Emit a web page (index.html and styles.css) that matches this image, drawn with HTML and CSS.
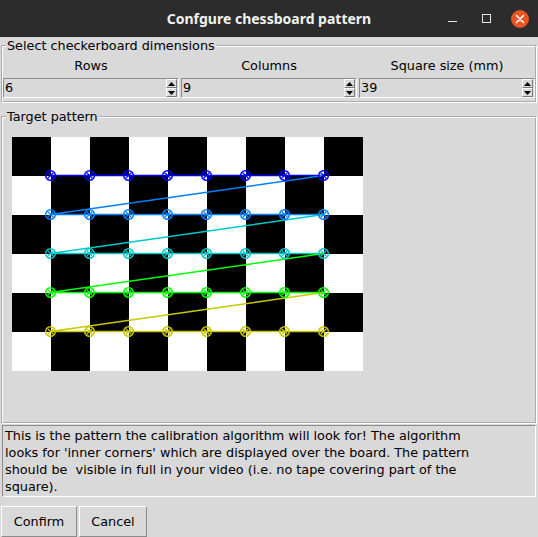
FILE: index.html
```html
<!DOCTYPE html>
<html>
<head>
<meta charset="utf-8">
<link rel="stylesheet" href="styles.css">
</head>
<body>
<div class="titlebar">
  <div></div>
  <div class="title">Confgure chessboard pattern</div>
  <div class="controls">
    <span class="ctl"><span class="min"></span></span>
    <span class="ctl"><span class="max"></span></span>
    <span class="ctl"><span class="close"><svg width="18" height="18" viewBox="0 0 18 18"><path d="M5.5 5.5L12.5 12.5M12.5 5.5L5.5 12.5" stroke="#fff" stroke-width="1.6" stroke-linecap="round"/></svg></span></span>
  </div>
</div>

<fieldset class="group dims">
  <legend>Select checkerboard dimensions</legend>
  <div class="grid">
    <div class="lbl">Rows</div>
    <div class="lbl">Columns</div>
    <div class="lbl">Square size (mm)</div>
    <div class="spin"><span class="val">6</span><span class="arrows"><span class="arr"><svg width="7" height="4"><path d="M3.5 0L7 4H0Z"/></svg></span><span class="arr"><svg width="7" height="4"><path d="M0 0H7L3.5 4Z"/></svg></span></span></div>
    <div class="spin"><span class="val">9</span><span class="arrows"><span class="arr"><svg width="7" height="4"><path d="M3.5 0L7 4H0Z"/></svg></span><span class="arr"><svg width="7" height="4"><path d="M0 0H7L3.5 4Z"/></svg></span></span></div>
    <div class="spin"><span class="val">39</span><span class="arrows"><span class="arr"><svg width="7" height="4"><path d="M3.5 0L7 4H0Z"/></svg></span><span class="arr"><svg width="7" height="4"><path d="M0 0H7L3.5 4Z"/></svg></span></span></div>
  </div>
</fieldset>

<fieldset class="group target">
  <legend>Target pattern</legend>
  <div class="canvas">
    <svg class="board" width="351" height="234" viewBox="0 0 351 234">
      <defs>
        <pattern id="chk" width="78" height="78" patternUnits="userSpaceOnUse">
          <rect x="0" y="0" width="39" height="39" fill="#000"/>
          <rect x="39" y="39" width="39" height="39" fill="#000"/>
        </pattern>
        <g id="mk" fill="none" stroke-width="1.5">
          <circle r="4.8"/>
          <path d="M-3 -3L3 3M-3 3L3 -3" stroke-width="1.2"/>
        </g>
      </defs>
      <rect width="351" height="234" fill="#fff"/>
      <rect width="351" height="234" fill="url(#chk)"/>
      <g fill="none" stroke-width="1.5">
        <path d="M38.5 38.5H311.5" stroke="#0000ff"/>
        <path d="M311.5 38.5L38.5 77.5H311.5" stroke="#0080ff"/>
        <path d="M311.5 77.5L38.5 116.5H311.5" stroke="#00c8c8"/>
        <path d="M311.5 116.5L38.5 155.5H311.5" stroke="#00ff00"/>
        <path d="M311.5 155.5L38.5 194.5H311.5" stroke="#c8c800"/>
      </g>
      <g stroke="#0000ff">
        <use href="#mk" x="38.5" y="38.5"/><use href="#mk" x="77.5" y="38.5"/><use href="#mk" x="116.5" y="38.5"/><use href="#mk" x="155.5" y="38.5"/><use href="#mk" x="194.5" y="38.5"/><use href="#mk" x="233.5" y="38.5"/><use href="#mk" x="272.5" y="38.5"/><use href="#mk" x="311.5" y="38.5"/>
      </g>
      <g stroke="#0080ff">
        <use href="#mk" x="38.5" y="77.5"/><use href="#mk" x="77.5" y="77.5"/><use href="#mk" x="116.5" y="77.5"/><use href="#mk" x="155.5" y="77.5"/><use href="#mk" x="194.5" y="77.5"/><use href="#mk" x="233.5" y="77.5"/><use href="#mk" x="272.5" y="77.5"/><use href="#mk" x="311.5" y="77.5"/>
      </g>
      <g stroke="#00c8c8">
        <use href="#mk" x="38.5" y="116.5"/><use href="#mk" x="77.5" y="116.5"/><use href="#mk" x="116.5" y="116.5"/><use href="#mk" x="155.5" y="116.5"/><use href="#mk" x="194.5" y="116.5"/><use href="#mk" x="233.5" y="116.5"/><use href="#mk" x="272.5" y="116.5"/><use href="#mk" x="311.5" y="116.5"/>
      </g>
      <g stroke="#00ff00">
        <use href="#mk" x="38.5" y="155.5"/><use href="#mk" x="77.5" y="155.5"/><use href="#mk" x="116.5" y="155.5"/><use href="#mk" x="155.5" y="155.5"/><use href="#mk" x="194.5" y="155.5"/><use href="#mk" x="233.5" y="155.5"/><use href="#mk" x="272.5" y="155.5"/><use href="#mk" x="311.5" y="155.5"/>
      </g>
      <g stroke="#c8c800">
        <use href="#mk" x="38.5" y="194.5"/><use href="#mk" x="77.5" y="194.5"/><use href="#mk" x="116.5" y="194.5"/><use href="#mk" x="155.5" y="194.5"/><use href="#mk" x="194.5" y="194.5"/><use href="#mk" x="233.5" y="194.5"/><use href="#mk" x="272.5" y="194.5"/><use href="#mk" x="311.5" y="194.5"/>
      </g>
    </svg>
  </div>
</fieldset>

<div class="info">This is the pattern the calibration algorithm will look for! The algorithm<br>looks for 'inner corners' which are displayed over the board. The pattern<br>should be&nbsp; visible in full in your video (i.e. no tape covering part of the<br>square).</div>

<div class="buttons">
  <button class="btn confirm">Confirm</button>
  <button class="btn cancel">Cancel</button>
</div>
</body>
</html>
```

FILE: styles.css
```css
html, body {
  margin: 0;
  padding: 0;
}
body {
  width: 538px;
  height: 537px;
  overflow: hidden;
  background: #d9d9d9;
  font-family: "DejaVu Sans", sans-serif;
  font-size: 12.8px;
  color: #000;
}

.titlebar {
  height: 37px;
  background: #2c2c2c;
  display: grid;
  grid-template-columns: 1fr auto 1fr;
  align-items: center;
}
.title {
  font-family: "Noto Sans", "DejaVu Sans", sans-serif;
  font-weight: 700;
  font-size: 14px;
  color: #f2f2f2;
  line-height: 37px;
}
.controls {
  justify-self: end;
  display: flex;
  padding-right: 1px;
  height: 37px;
}
.ctl {
  width: 34px;
  height: 37px;
  display: flex;
  align-items: center;
  justify-content: center;
}
.min {
  width: 9px;
  height: 1px;
  background: #e6e6e6;
  margin-top: 5px;
}
.max {
  width: 7px;
  height: 7px;
  border: 1px solid #e6e6e6;
}
.close {
  width: 18px;
  height: 18px;
  border-radius: 50%;
  background: #e95420;
  display: flex;
  margin-top: 1px;
}

.group {
  margin: 0 1px;
  padding: 0;
  border: 2px groove #ffffff;
  min-inline-size: 0;
}
.group legend {
  margin-left: 3px;
  padding: 0 1px;
  line-height: 16px;
  font-size: 12.8px;
}
.dims {
  margin-top: 1px;
}
.grid {
  display: grid;
  grid-template-columns: repeat(3, 1fr);
  column-gap: 2px;
  padding-bottom: 3px;
}
.lbl {
  height: 24px;
  line-height: 24px;
  text-align: center;
}
.spin {
  height: 20px;
  box-sizing: border-box;
  border: 1px solid;
  border-color: #8c8c8c #ffffff #ffffff #8c8c8c;
  display: flex;
  justify-content: space-between;
  align-items: stretch;
  padding-left: 1px;
  padding-right: 1px;
}
.val {
  line-height: 18px;
}
.arrows {
  display: flex;
  flex-direction: column;
  justify-content: center;
}
.arr {
  width: 9px;
  height: 7px;
  border: 1px solid;
  border-color: #ffffff #7a7a7a #7a7a7a #ffffff;
  background: #d9d9d9;
  display: flex;
  align-items: center;
  justify-content: center;
}
.arr svg {
  display: block;
  fill: #000;
}

.target {
  margin-top: 6px;
}
.canvas {
  height: 297px;
  box-sizing: border-box;
  padding: 12px 0 0 9px;
}
.board {
  display: block;
}

.info {
  margin: 1px 2px 0;
  border: 1px solid;
  border-color: #8c8c8c #ffffff #ffffff #8c8c8c;
  padding: 1px 2px;
  line-height: 17px;
  height: 68px;
  white-space: nowrap;
}

.buttons {
  display: flex;
  gap: 2px;
  padding-left: 1px;
  margin-top: 9px;
}
.btn {
  font-family: "DejaVu Sans", sans-serif;
  font-size: 12.8px;
  color: #000;
  background: #d9d9d9;
  height: 31px;
  border: 1px solid;
  border-color: #ffffff #8c8c8c #8c8c8c #ffffff;
  padding: 0;
  margin: 0;
}
.confirm { width: 76px; }
.cancel { width: 68px; }
```
